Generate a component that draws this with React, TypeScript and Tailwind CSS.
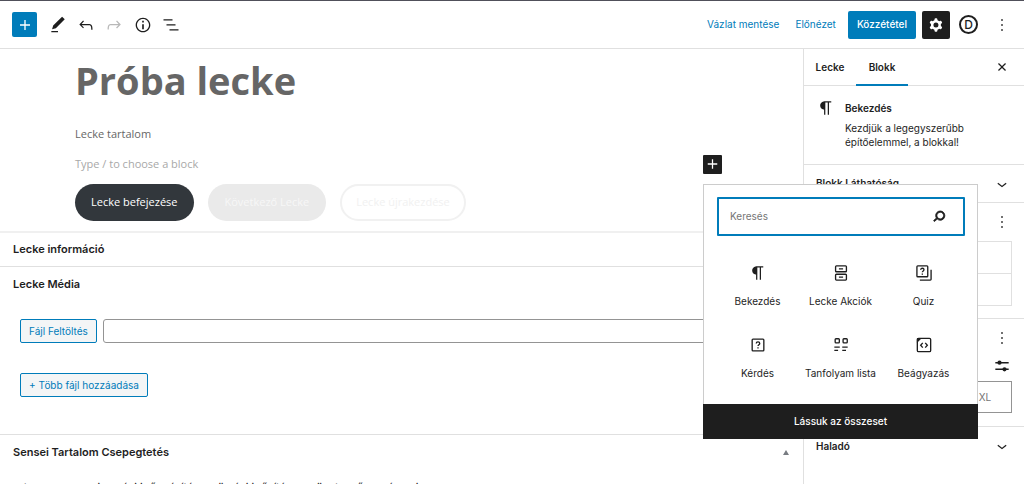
import type { ReactNode } from 'react';

const icons = {
  plus: 'M18 11.2h-5.2V6h-1.6v5.2H6v1.6h5.2V18h1.6v-5.2H18z',
  edit: 'M20.1 5.1L16.9 2 6.2 12.7l-1.3 4.4 4.5-1.3L20.1 5.1zM4 20.8h8v-1.5H4v1.5z',
  undo: 'M18.3 11.7c-.6-.6-1.4-.9-2.3-.9H6.7l2.9-3.3-1.1-1-4.5 5L8.5 16l1-1-2.7-2.7H16c.5 0 .9.2 1.3.5 1 1 1 3.4 1 4.5v.3h1.5v-.2c0-1.5 0-4.3-1.5-5.7z',
  redo: 'M15.6 6.5l-1.1 1 2.9 3.3H8c-.9 0-1.7.3-2.3.9-1.4 1.5-1.4 4.2-1.4 5.6v.2h1.5v-.3c0-1.1 0-3.5 1-4.5.3-.3.7-.5 1.3-.5h9.2L14.5 15l1.1 1.1 4.6-4.6-4.6-5z',
  info: 'M12 3.2c-4.8 0-8.8 3.9-8.8 8.8 0 4.8 3.9 8.8 8.8 8.8 4.8 0 8.8-3.9 8.8-8.8 0-4.8-4-8.8-8.8-8.8zm0 16c-4 0-7.2-3.3-7.2-7.2C4.8 8 8 4.8 12 4.8s7.2 3.3 7.2 7.2c0 4-3.2 7.2-7.2 7.2zM11 17h2v-6h-2v6zm0-8h2V7h-2v2z',
  listView: 'M13.8 5.2H3v1.5h10.8V5.2zm-3.6 12v1.5H21v-1.5H10.2zm7.2-6H6.6v1.5h10.8v-1.5z',
  cog: 'M10.289 4.836A1 1 0 0111.275 4h1.306a1 1 0 01.987.836l.244 1.466c.787.26 1.503.679 2.108 1.218l1.393-.522a1 1 0 011.216.437l.653 1.13a1 1 0 01-.23 1.273l-1.148.944a6.025 6.025 0 010 2.435l1.149.946a1 1 0 01.23 1.272l-.653 1.13a1 1 0 01-1.216.437l-1.394-.522c-.605.54-1.32.958-2.108 1.218l-.244 1.466a1 1 0 01-.987.836h-1.306a1 1 0 01-.986-.836l-.244-1.466a5.995 5.995 0 01-2.108-1.218l-1.394.522a1 1 0 01-1.217-.436l-.653-1.131a1 1 0 01.23-1.272l1.149-.946a6.026 6.026 0 010-2.435l-1.148-.944a1 1 0 01-.23-1.272l.653-1.131a1 1 0 011.217-.437l1.393.522a5.994 5.994 0 012.108-1.218l.244-1.466zM14.929 12a3 3 0 11-6 0 3 3 0 016 0z',
  more: 'M13 19h-2v-2h2v2zm0-6h-2v-2h2v2zm0-6h-2V5h2v2z',
  close: 'M12 13.06l3.712 3.713 1.061-1.06L13.061 12l3.712-3.712-1.06-1.06L12 10.938 8.288 7.227l-1.061 1.06L10.939 12l-3.712 3.712 1.06 1.061L12 13.061z',
  paragraph: 'M18.3 4H9.9v-.1l-.9.2c-2.3.4-4 2.4-4 4.8s1.7 4.4 4 4.8l.7.1V20h1.5V5.5h2.9V20h1.5V5.5h2.7V4z',
  chevron: 'M17.5 11.6L12 16l-5.5-4.4.9-1.2L12 14l4.5-3.6 1 1.2z',
  search: 'M13.5 6C10.5 6 8 8.5 8 11.5c0 1.1.3 2.1.9 3l-3.4 3 1 1.1 3.4-2.9c1 .9 2.2 1.4 3.6 1.4 3 0 5.5-2.5 5.5-5.5C19 8.5 16.5 6 13.5 6zm0 9.5c-2.2 0-4-1.8-4-4s1.8-4 4-4 4 1.8 4 4-1.8 4-4 4z',
};

function Icon({ name, className = '' }: { name: keyof typeof icons; className?: string }) {
  return (
    <svg viewBox="0 0 24 24" className={`w-5 h-5 fill-current ${className}`} aria-hidden="true">
      <path fillRule="evenodd" clipRule="evenodd" d={icons[name]} />
    </svg>
  );
}

function LineIcon({ children }: { children: ReactNode }) {
  return (
    <svg viewBox="0 0 24 24" className="w-5 h-5 fill-none stroke-current" strokeWidth="1.6" aria-hidden="true">
      {children}
    </svg>
  );
}

const blocks = [
  { label: 'Bekezdés', icon: <Icon name="paragraph" /> },
  {
    label: 'Lecke Akciók',
    icon: (
      <LineIcon>
        <rect x="5.5" y="3.5" width="13" height="7" rx="1" />
        <rect x="5.5" y="13.5" width="13" height="7" rx="1" />
        <path d="M9.5 7h5M9.5 17h5" />
      </LineIcon>
    ),
  },
  {
    label: 'Quiz',
    icon: (
      <LineIcon>
        <rect x="3.5" y="3.5" width="13" height="13" rx="1" />
        <path d="M20.5 8v11.5a1 1 0 01-1 1H7" />
        <path d="M8 8.2c0-1.1.9-1.9 2-1.9s2 .8 2 1.9c0 1.4-2 1.4-2 3M10 12.6v1.5" />
      </LineIcon>
    ),
  },
  {
    label: 'Kérdés',
    icon: (
      <LineIcon>
        <rect x="5" y="5" width="14" height="14" rx="1" />
        <path d="M9.9 10.2c0-1.2 1-2 2.1-2s2.1.8 2.1 2c0 1.5-2.1 1.5-2.1 3.1M12 14.6v1.6" />
      </LineIcon>
    ),
  },
  {
    label: 'Tanfolyam lista',
    icon: (
      <LineIcon>
        <rect x="5" y="4.5" width="5" height="5" rx="1" />
        <rect x="14.5" y="4.5" width="5" height="5" rx="1" />
        <path d="M4 14.5h6.5M13.5 14.5H20M4 18.5h4.5M13.5 18.5H18" />
      </LineIcon>
    ),
  },
  {
    label: 'Beágyazás',
    icon: (
      <LineIcon>
        <rect x="4" y="4" width="16" height="16" rx="1.5" />
        <path d="M3.5 3.5h6l-6 6z" fill="currentColor" stroke="none" />
        <path d="M10.5 9.5L8 12.3l2.5 2.8M13.5 9.5l2.5 2.8-2.5 2.8" />
      </LineIcon>
    ),
  },
];

function Inserter() {
  return (
    <div className="absolute left-0 top-full z-10 mt-[10px] w-[275px] border border-[#cccccc] bg-white text-[#1e1e1e]">
      <div className="mr-3 ml-[13px] mt-3 flex h-[39px] items-center rounded-[1px] border-2 border-[#007cba] pl-[11px] pr-3.5">
        <input
          type="text"
          aria-label="Keresés"
          placeholder="Keresés"
          className="min-w-0 flex-1 text-[10px] outline-none placeholder:text-[#757575]"
        />
        <button aria-label="Keresés indítása"><Icon name="search" className="stroke-current" /></button>
      </div>
      <div className="mx-3 mt-[15px] mb-[9px] grid grid-cols-3">
        {blocks.map((block) => (
          <button key={block.label} className="flex h-[72px] flex-col items-center gap-2.5 pt-3">
            {block.icon}
            <span className="whitespace-nowrap text-[10px] leading-4">{block.label}</span>
          </button>
        ))}
      </div>
      <button className="-mx-px -mb-px block h-[35px] w-[275px] bg-[#1e1e1e] text-[10px] font-medium text-white">
        Lássuk az összeset
      </button>
    </div>
  );
}

function TopBar() {
  return (
    <header className="flex h-[49px] shrink-0 items-center border-t border-b border-t-[#50505a] border-b-[#e0e0e0] px-3">
      <div className="flex items-center gap-2">
        <button aria-label="Blokk hozzáadása" className="mr-[3px] flex h-[25px] w-[25px] items-center justify-center rounded-[2px] bg-[#007cba] text-white">
          <Icon name="plus" />
        </button>
        <button aria-label="Szerkesztés"><Icon name="edit" /></button>
        <button aria-label="Visszavonás"><Icon name="undo" /></button>
        <button aria-label="Mégis" className="mr-px text-[#b8b8b8]"><Icon name="redo" /></button>
        <button aria-label="Részletek"><Icon name="info" /></button>
        <button aria-label="Lista nézet"><Icon name="listView" /></button>
      </div>
      <div className="ml-auto flex items-center text-[10px]">
        <button className="mr-4 text-[#007cba]">Vázlat mentése</button>
        <button className="mr-3 text-[#007cba]">Előnézet</button>
        <button className="mr-1.5 h-7 rounded-[2px] bg-[#007cba] px-[9px] font-medium text-white">Közzététel</button>
        <button aria-label="Beállítások" className="mr-[9px] flex h-7 w-7 items-center justify-center rounded-[2px] bg-[#1e1e1e] text-white">
          <Icon name="cog" />
        </button>
        <button aria-label="Divi" className="mr-3.5 flex h-[19px] w-[19px] items-center justify-center rounded-full border-2 border-[#1e1e1e] text-[12px] leading-none font-medium">
          D
        </button>
        <button aria-label="Továbbiak"><Icon name="more" /></button>
      </div>
    </header>
  );
}

function Sidebar() {
  return (
    <aside className="w-[221px] shrink-0 border-l border-[#e0e0e0] text-[10px]">
      <div className="flex h-[37px] items-stretch border-b border-[#e0e0e0] pr-3">
        <button className="w-[52px] font-semibold">Lecke</button>
        <button className="-mb-px w-[52px] border-b-2 border-[#007cba] pt-px font-semibold">Blokk</button>
        <button aria-label="Bezárás" className="ml-auto"><Icon name="close" /></button>
      </div>
      <div className="flex h-[79px] gap-[9px] border-b border-[#e0e0e0] pt-3 pl-3">
        <Icon name="paragraph" className="shrink-0" />
        <div className="pt-[3px]">
          <h2 className="mb-1.5 leading-[14px] font-semibold">Bekezdés</h2>
          <p className="leading-[14px]">Kezdjük a legegyszerűbb<br />építőelemmel, a blokkal!</p>
        </div>
      </div>
      <button className="flex h-[38px] w-full items-center justify-between border-b border-[#e0e0e0] pr-3 pl-3 font-semibold">
        Blokk Láthatóság
        <Icon name="chevron" />
      </button>
      <section className="h-[116px] border-b border-[#e0e0e0] pt-[9px] pr-3 pl-3">
        <button aria-label="Szín beállítások" className="ml-auto block"><Icon name="more" /></button>
        <div className="mt-[9px] h-[65px] border border-[#e0e0e0]">
          <div className="h-8 border-b border-[#e0e0e0]" />
        </div>
      </section>
      <section className="h-[108px] border-b border-[#e0e0e0] pt-[9px] pr-3 pl-3">
        <button aria-label="Tipográfia beállítások" className="ml-auto block"><Icon name="more" /></button>
        <button aria-label="Egyéni méret" className="mt-2 ml-auto block">
          <svg viewBox="0 0 24 24" className="h-5 w-5 fill-current" aria-hidden="true">
            <path d="M4 7.2h16v1.7H4zM4 15.1h16v1.7H4z" />
            <circle cx="9" cy="8" r="2.5" />
            <circle cx="15" cy="16" r="2.5" />
          </svg>
        </button>
        <div className="mt-[5px] flex h-8 justify-end border border-[#949494]">
          <button className="w-[52px] text-[#757575]">XL</button>
        </div>
      </section>
      <button className="flex h-[38px] w-full items-center justify-between pr-3 pl-3 font-semibold">
        Haladó
        <Icon name="chevron" />
      </button>
    </aside>
  );
}

function Editor() {
  return (
    <div className="h-[184px] border-b-2 border-[#f0f0f0] pr-[81px] pl-[75px] font-['Open_Sans','Noto_Sans',sans-serif] text-[11px] text-[#666666]">
      <h1 className="pt-[7px] text-[38px] leading-[48px] font-bold">Próba lecke</h1>
      <p className="mt-[22px] leading-4">Lecke tartalom</p>
      <div className="mt-3.5 flex h-4 items-center justify-between">
        <p className="text-[#a8a8a8]">Type / to choose a block</p>
        <div className="relative font-['Inter',sans-serif]">
          <button aria-label="Blokk hozzáadása" className="flex h-[19px] w-[19px] items-center justify-center rounded-[1px] bg-[#1e1e1e] text-white">
            <Icon name="plus" />
          </button>
          <Inserter />
        </div>
      </div>
      <div className="mt-3 flex gap-3.5">
        <button className="h-[37px] rounded-full bg-[#32373c] px-4 text-white">Lecke befejezése</button>
        <button className="h-[37px] rounded-full bg-[#eaeaea] px-[17px] text-[#f7f7f7]">Következő Lecke</button>
        <button className="h-[37px] rounded-full border-2 border-[#f1f1f1] px-3.5 text-[#f1f1f1]">Lecke újrakezdése</button>
      </div>
    </div>
  );
}

function MetaBoxes() {
  return (
    <div className="text-[11px]">
      <h2 className="flex h-[34px] items-center border-b border-[#e0e0e0] px-[13px] font-semibold">Lecke információ</h2>
      <section className="h-[168px] border-b border-[#e0e0e0]">
        <h2 className="flex h-[34px] items-center px-[13px] font-semibold">Lecke Média</h2>
        <div className="mt-[18px] flex gap-1.5 pr-5 pl-5 text-[10px]">
          <button className="h-6 rounded-[2px] border border-[#007cba] bg-[#f3f5f6] px-2 whitespace-nowrap text-[#007cba]">Fájl Feltöltés</button>
          <input type="text" aria-label="Média fájl" className="h-6 min-w-0 flex-1 rounded-[3px] border border-[#949494] px-2" />
        </div>
        <button className="mt-[30px] ml-5 h-6 rounded-[2px] border border-[#007cba] bg-[#f3f5f6] px-2 text-[10px] text-[#007cba]">+ Több fájl hozzáadása</button>
      </section>
      <section>
        <div className="flex h-[34px] items-center justify-between pr-3.5 pl-[13px]">
          <h2 className="font-semibold">Sensei Tartalom Csepegtetés</h2>
          <button aria-label="Összecsukás">
            <svg viewBox="0 0 6 5" className="h-[5px] w-[6px] fill-[#787c82]" aria-hidden="true"><path d="M3 0l3 5H0z" /></svg>
          </button>
        </div>
        <p className="mt-[11px] px-[13px] leading-4 whitespace-nowrap">
          A tananyag megjelenési időbeállítása, küldési időzítése a következő leckéhez is
        </p>
      </section>
    </div>
  );
}

export default function App() {
  return (
    <div className="flex h-screen flex-col overflow-hidden bg-white font-['Inter','Liberation_Sans',sans-serif] text-[#1e1e1e]">
      <TopBar />
      <div className="flex min-h-0 flex-1">
        <main className="min-w-0 flex-1">
          <Editor />
          <MetaBoxes />
        </main>
        <Sidebar />
      </div>
    </div>
  );
}
